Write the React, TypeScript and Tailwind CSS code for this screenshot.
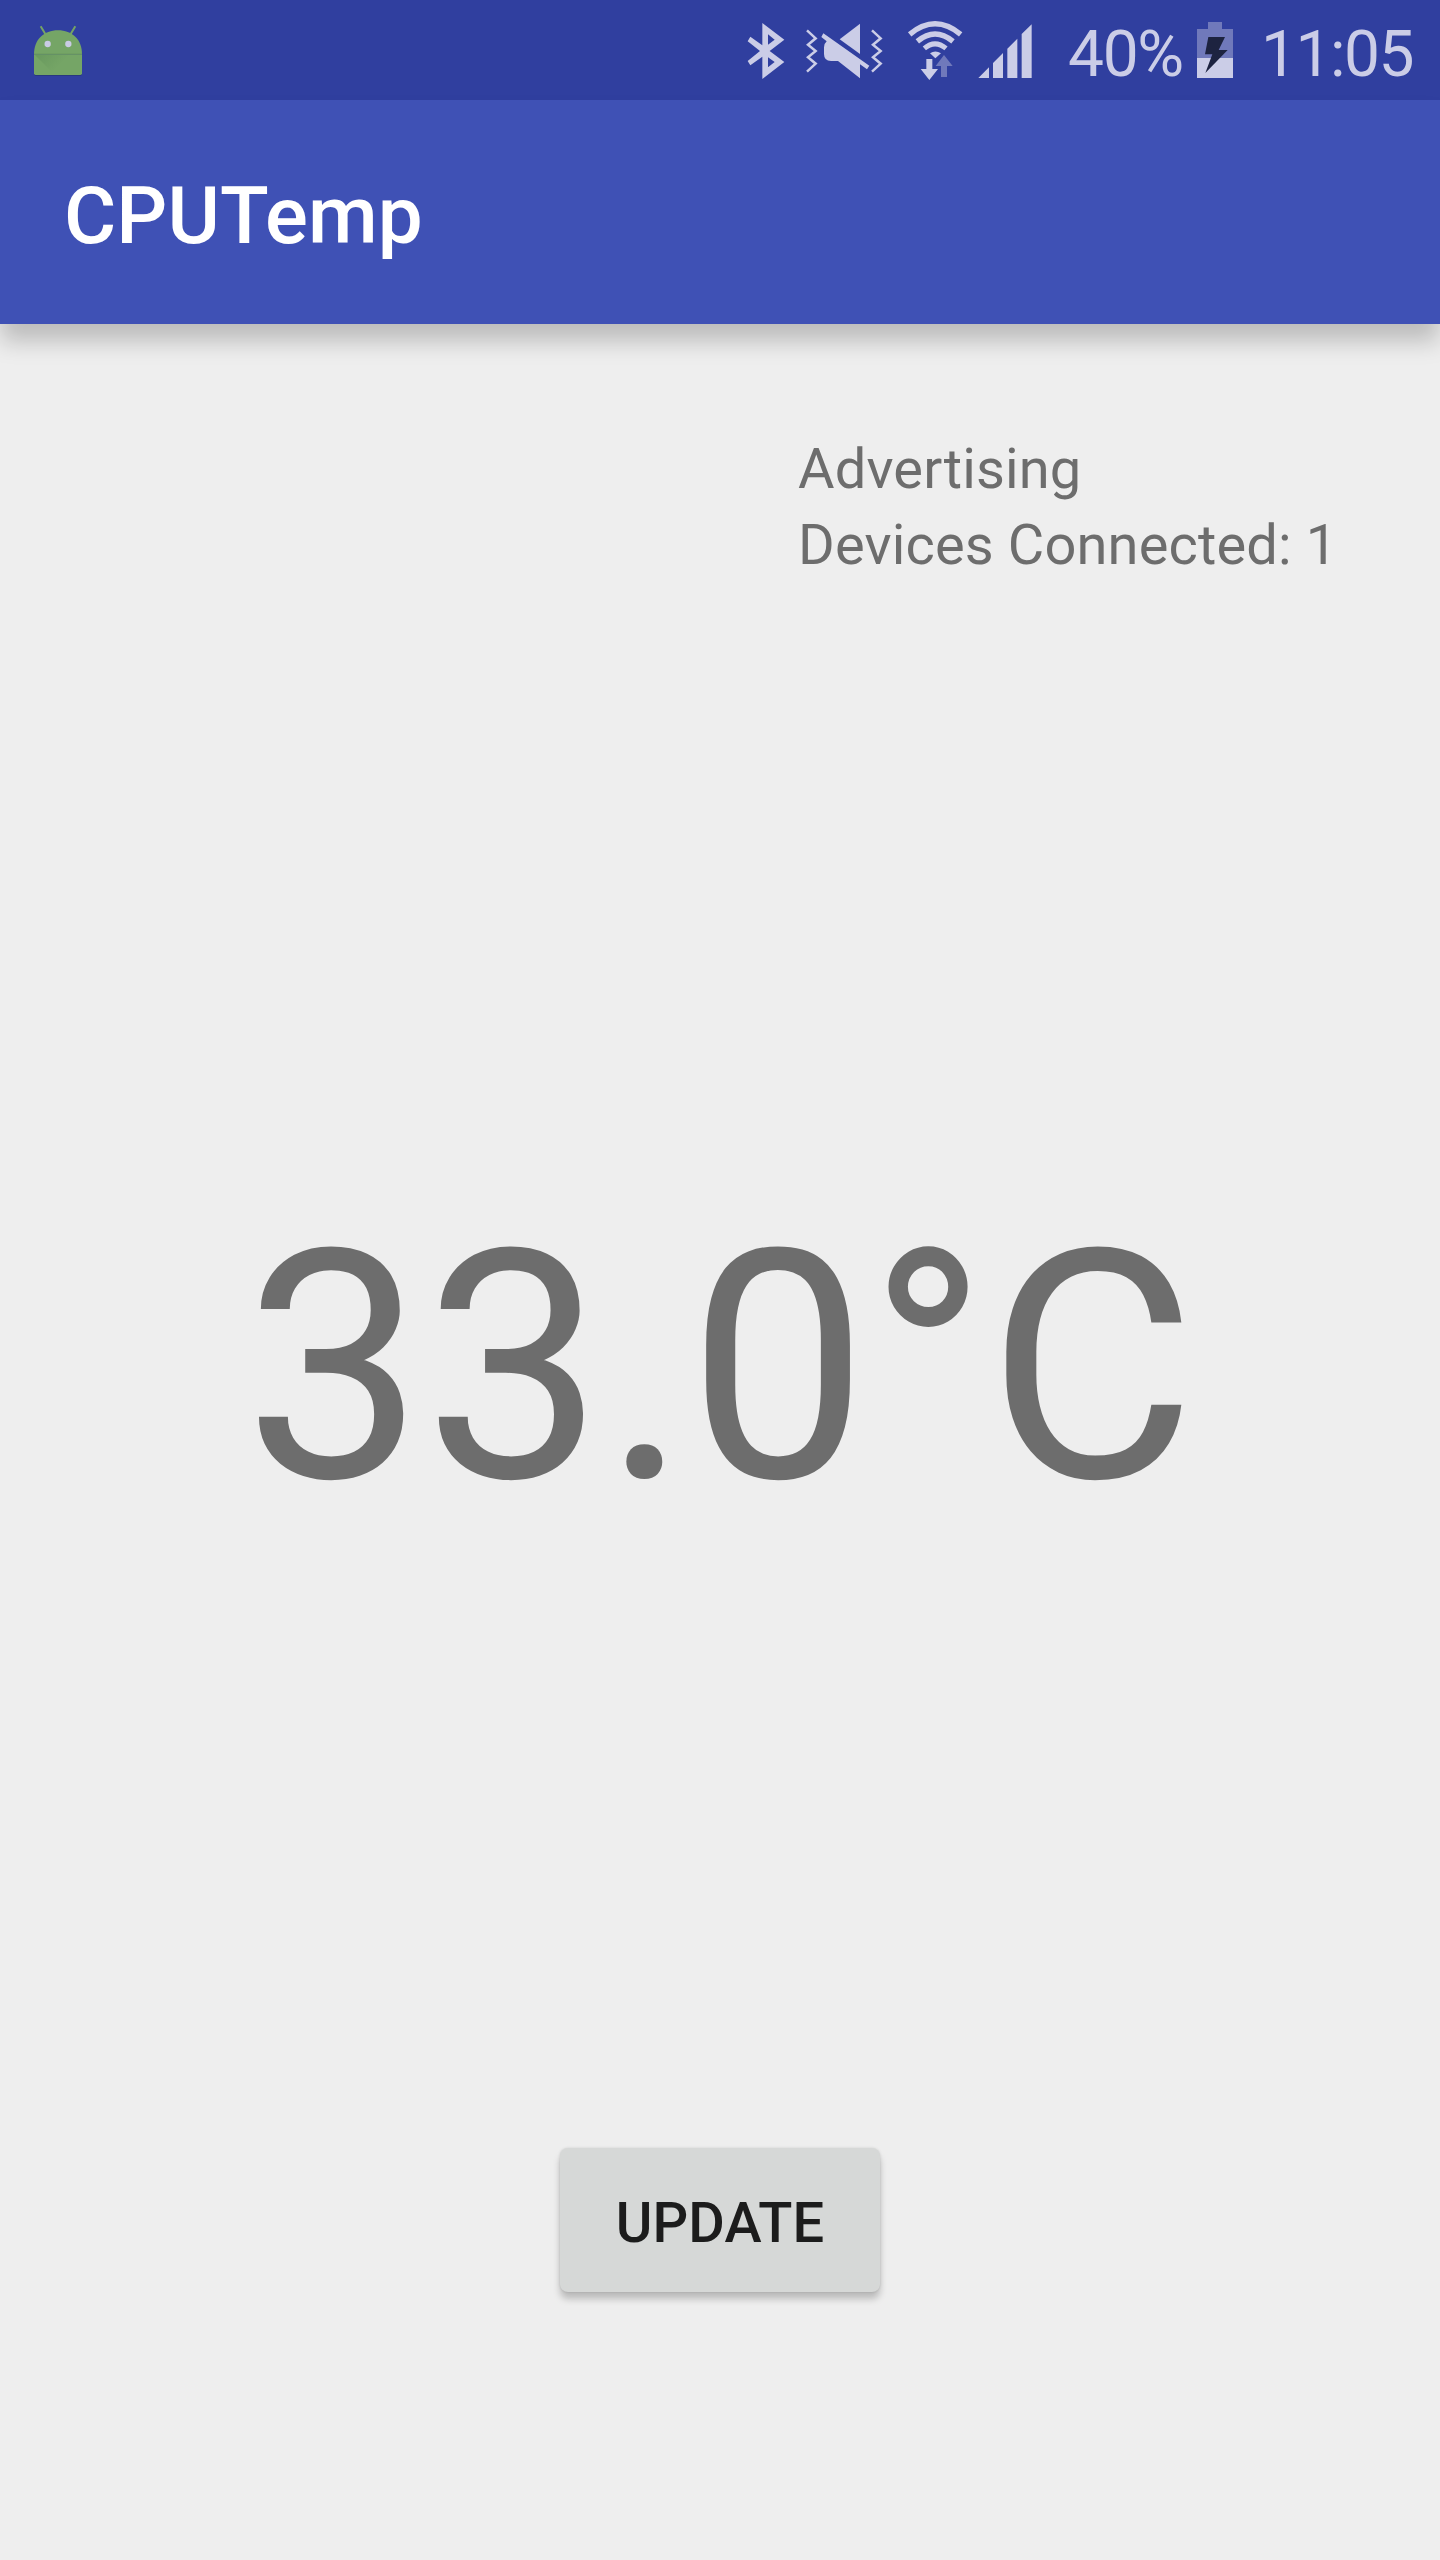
import React from "react";

function AndroidIcon() {
  return (
    <svg className="h-[100px] w-[56px]" viewBox="90 0 168 300">
      <defs>
        <linearGradient id="fold" x1="120" y1="165" x2="165" y2="210" gradientUnits="userSpaceOnUse">
          <stop offset="0" stopColor="#6a9a5f" />
          <stop offset="1" stopColor="#75a566" />
        </linearGradient>
      </defs>
      <path d="M102 222q1 6 6 6h132q5 0 6-6v-3H102z" fill="#28387f" />
      <path d="M122 79l14 23M226 79l-14 23" stroke="#75a365" strokeWidth="6" />
      <path d="M102 163C102 118 132 91 174 91s72 27 72 72z" fill="#75a566" />
      <path d="M102 163h144v57q0 5-5 5H107q-5 0-5-5z" fill="#75a566" />
      <path d="M104 164h136v56H160z" fill="url(#fold)" />
      <path d="M102 162.500h144" stroke="#628f5c" strokeWidth="2" />
      <circle cx="143" cy="132" r="9.500" fill="#c9cbe4" />
      <circle cx="205" cy="132" r="9.500" fill="#c9cbe4" />
    </svg>
  );
}

function BluetoothIcon() {
  return (
    <svg className="ml-auto h-[100px] w-[40px]" viewBox="48 0 120 300" fill="#cbcde7">
      <path
        fillRule="evenodd"
        d="M97 69L163 119 119 153 163 186 97 237V170L61 196 53 183 90 153 53 124 61 110 97 136zM114 103V134L134 119zM114 172V202L134 186z"
      />
    </svg>
  );
}

function MuteIcon() {
  return (
    <svg className="ml-[18px] h-[100px] w-[80px]" viewBox="222 0 240 300" fill="#cbcde7">
      <path d="M231 91L257 115 234 134 257 153 234 172 257 191 231 215" fill="none" stroke="#cbcde7" strokeWidth="7.500" />
      <path d="M426 91L452 115 429 134 452 153 429 172 452 191 426 215" fill="none" stroke="#cbcde7" strokeWidth="7.500" />
      <path d="M390 71V162L329 118z" />
      <path d="M280 100L418 197 411 208 390 193V235L324 183H303Q282 183 282 162V142Q282 131 290 124L274 111z" />
    </svg>
  );
}

function WifiIcon() {
  return (
    <svg className="ml-[22px] h-[100px] w-[58px]" viewBox="48 0 174 300" fill="none" stroke="#cbcde7">
      <path d="M59 103Q135 40 212 103" strokeWidth="16" />
      <path d="M82 124Q135 80 189 124" strokeWidth="16" />
      <path d="M103 145Q135 118 168 145" strokeWidth="15" />
      <path d="M120 160Q136 149 153 160L136 175z" fill="#cbcde7" stroke="none" />
      <path d="M109 177H127V207H144L118 240 92 207H109z" fill="#cbcde7" stroke="none" />
      <path d="M162 165L188 198H171V231H153V198H137z" fill="#7079bb" stroke="none" />
    </svg>
  );
}

function SignalIcon() {
  return (
    <svg className="ml-[13px] h-[100px] w-[56px]" viewBox="261 0 168 300" fill="#cbcde7">
      <path d="M265 234L297 202V234zM309 234V189L339 159V234zM352 234V146L382 116V234zM395 234V102L425 73V234z" />
    </svg>
  );
}

function BatteryIcon() {
  return (
    <svg className="h-[100px] w-[36px]" viewBox="441 0 108 300">
      <path d="M441 87H474V66H516V87H549V174H441z" fill="#7079bb" />
      <path d="M441 174H549V234H441z" fill="#cbcde7" />
      <path d="M475 111H525L506 150H533L466 219 487 163H465z" fill="#1d2340" />
    </svg>
  );
}

function StatusBar() {
  return (
    <div className="flex h-[100px] items-center bg-[#303f9f] pl-[30px] text-[64px] leading-[100px] text-[#cbcde7]">
      <AndroidIcon />
      <BluetoothIcon />
      <MuteIcon />
      <WifiIcon />
      <SignalIcon />
      <span className="ml-[35px] w-[129px] whitespace-nowrap pt-[10px] tracking-[-1.3px]">40%</span>
      <BatteryIcon />
      <span className="ml-[28px] w-[179px] whitespace-nowrap pt-[10px] tracking-[-1.5px]">11:05</span>
    </div>
  );
}

export default function App() {
  return (
    <div className="flex h-[2560px] w-[1440px] flex-col overflow-hidden bg-[#eeeeee] font-['Roboto',sans-serif] text-[#6d6d6d]">
      <StatusBar />
      <header className="flex h-[224px] items-center bg-[#3f51b5] px-16 pt-[7px] shadow-[0_18px_22px_-1px_rgba(0,0,0,0.21)]">
        <h1 className="text-[80px] leading-[94px] font-medium tracking-[0.1px] text-white">CPUTemp</h1>
      </header>
      <main className="flex flex-1 flex-col">
        <div className="ml-[798px] mt-[107px] text-[56px] leading-[76px] tracking-[0.15px] whitespace-nowrap">
          <p>Advertising</p>
          <p>Devices Connected: 1</p>
        </div>
        <p className="mt-[597px] text-center text-[320px] leading-[376px] whitespace-nowrap">33.0°C</p>
        <button className="mx-auto mt-[592px] h-[144px] w-[320px] rounded-[8px] bg-[#d6d8d7] pt-[6px] text-[56px] leading-[66px] font-medium tracking-[0.15px] text-[#1c1c1c] shadow-[0_7px_7px_rgba(0,0,0,0.21),0_0_3px_rgba(0,0,0,0.13)]">
          UPDATE
        </button>
      </main>
    </div>
  );
}
